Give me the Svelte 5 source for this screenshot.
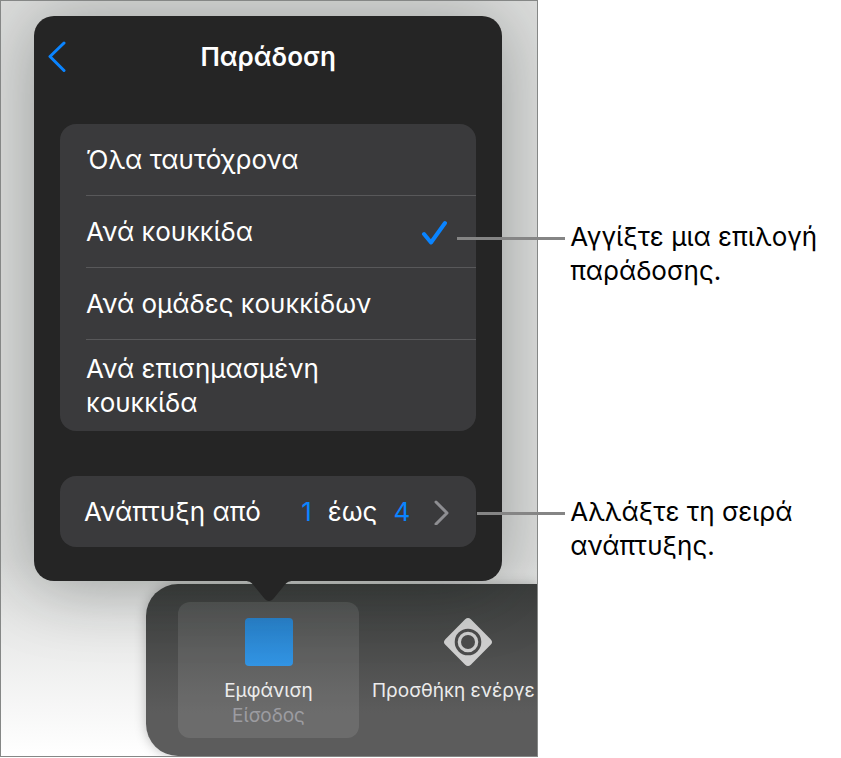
<script>
  let selected = $state("bullet");
  let from = $state(1);
  let to = $state(4);

  const options = [
    { id: "all", label: "Όλα ταυτόχρονα" },
    { id: "bullet", label: "Ανά κουκκίδα" },
    { id: "groups", label: "Ανά ομάδες κουκκίδων" },
    { id: "highlighted", label: "Ανά επισημασμένη κουκκίδα" },
  ];
</script>

<main class="figure">
  <section class="screen">
    <div class="popover">
      <header>
        <button class="back" aria-label="Πίσω">
          <svg viewBox="0 0 20 32" width="20" height="32">
            <path d="M18 2 L4 15.5 L18 29.5" />
          </svg>
        </button>
        <h1>Παράδοση</h1>
      </header>

      <div class="card options">
        {#each options as option}
          <label class="option">
            <input
              type="radio"
              name="delivery"
              value={option.id}
              bind:group={selected}
            />
            <span class="name">{option.label}</span>
            {#if selected === option.id}
              <svg class="check" viewBox="0 0 26 26" width="26" height="26">
                <path d="M3 15 L10 23.5 L24 4" />
              </svg>
            {/if}
          </label>
        {/each}
      </div>

      <button class="card build">
        <span class="name">Ανάπτυξη από</span>
        <span class="number">{from}</span>
        <span>έως</span>
        <span class="number">{to}</span>
        <svg class="chevron" viewBox="0 0 16 26" width="16" height="26">
          <path d="M2 3 L13 14 L2 25" />
        </svg>
      </button>

      <svg class="tail" viewBox="0 0 48 22" width="48" height="22">
        <path d="M0 0 H48 C43 0 41 2 38 6 L29 17 C26 21 22 21 19 17 L10 6 C7 2 5 0 0 0 Z" />
      </svg>
    </div>

    <nav class="toolbar">
      <button class="action current">
        <span class="swatch"></span>
        <span>Εμφάνιση</span>
        <small>Είσοδος</small>
      </button>
      <button class="action">
        <svg class="diamond" viewBox="0 0 50 50" width="50" height="50">
          <rect x="7" y="7" width="36" height="36" rx="4" transform="rotate(45 25 25)" />
          <circle class="ring" cx="25" cy="25" r="11.8" />
          <circle class="dot" cx="25" cy="25" r="7" />
        </svg>
        <span>Προσθήκη ενέργε</span>
      </button>
    </nav>
  </section>

  <aside class="notes">
    <p class="long">Αγγίξτε μια επιλογή παράδοσης.</p>
    <p>Αλλάξτε τη σειρά ανάπτυξης.</p>
  </aside>
</main>

<style>
  :global(body) {
    margin: 0;
    background: #fff;
  }
  .figure {
    display: grid;
    grid-template-columns: 16fr 9fr;
    font-family: Inter, "Open Sans", sans-serif;
    font-size: 26px;
    line-height: 34px;
    color: #000;
  }
  button {
    font: inherit;
    color: inherit;
    border: 0;
    padding: 0;
    background: none;
    text-align: left;
  }
  svg {
    display: block;
    flex: none;
  }
  .screen {
    min-width: 0;
    overflow: hidden;
    border: 1px solid #858786;
    padding-top: 15px;
    background: linear-gradient(#dcdddc 0%, #dcdddc 74%, #fff 100%);
    color: #fff;
  }
  .popover {
    position: relative;
    z-index: 1;
    box-sizing: border-box;
    margin: 0 35px 0 33px;
    padding: 0 26px 34px;
    border-radius: 20px;
    background: #252525;
    box-shadow: 0 4px 70px rgba(20, 30, 25, 0.34);
  }
  header {
    display: grid;
    grid-template-columns: 20px 1fr 20px;
    align-items: center;
    height: 82px;
    margin: 0 -14px 26px;
  }
  h1 {
    margin: 0;
    font-size: 26px;
    font-weight: 600;
    text-align: center;
  }
  .back path,
  .check path,
  .chevron path {
    fill: none;
    stroke: #0a84ff;
    stroke-width: 3;
    stroke-linecap: round;
    stroke-linejoin: round;
  }
  .card {
    border-radius: 16px;
    background: #3a3a3c;
  }
  .options {
    padding-left: 26px;
    margin-bottom: 45px;
  }
  .option {
    display: flex;
    align-items: center;
    box-sizing: border-box;
    min-height: 72px;
    padding: 0 29px 0 0;
  }
  .option:first-child {
    min-height: 71px;
  }
  .option + .option {
    border-top: 1px solid #58585a;
  }
  .option:last-child {
    min-height: 92px;
  }
  .option input {
    position: absolute;
    opacity: 0;
  }
  .option .name {
    flex: 1;
    max-width: 290px;
  }
  .check {
    margin-left: auto;
  }
  .check path {
    stroke-width: 4;
  }
  .build {
    display: flex;
    align-items: center;
    gap: 16px;
    width: 100%;
    height: 71px;
    padding: 0 26px 0 24px;
  }
  .build .name {
    flex: 1;
  }
  .number {
    color: #0a84ff;
  }
  .chevron {
    margin-left: 8px;
  }
  .chevron path {
    stroke: #8e8e92;
  }
  .tail {
    position: absolute;
    top: 100%;
    left: 211px;
    fill: #252525;
  }
  .toolbar {
    display: flex;
    box-sizing: border-box;
    height: 172px;
    margin: 3px 0 0 145px;
    padding: 18px 0 18px 32px;
    border-radius: 32px 0 0 32px;
    background: linear-gradient(#3b3d3c, #5c5c5c 75%);
    box-shadow: 0 0 12px rgba(0, 0, 0, 0.25);
    font-size: 19px;
    line-height: 25px;
    color: #ececec;
  }
  .action {
    flex: none;
    display: flex;
    flex-direction: column;
    justify-content: flex-start;
    align-items: center;
    box-sizing: border-box;
    padding: 16px 13px 0;
    border-radius: 12px;
    white-space: nowrap;
  }
  .current {
    width: 181px;
    background: rgba(255, 255, 255, 0.1);
  }
  .swatch {
    width: 48px;
    height: 48px;
    margin-bottom: 12px;
    border-radius: 4px;
    background: linear-gradient(#2881ca, #3294e3);
  }
  small {
    font-size: 19px;
    color: #9c9ca1;
  }
  .diamond {
    fill: #cfcfcf;
    align-self: flex-start;
    margin: -1px 0 11px 71px;
  }
  .ring {
    fill: none;
    stroke: #4c4c4c;
    stroke-width: 3;
  }
  .dot {
    fill: #4c4c4c;
  }
  .notes {
    display: flex;
    flex-direction: column;
    gap: 207px;
    padding: 220px 0 0 32px;
  }
  .notes p {
    position: relative;
    margin: 0;
  }
  .notes p::before {
    content: "";
    position: absolute;
    z-index: 2;
    top: 17px;
    right: calc(100% + 5px);
    width: 88px;
    height: 3px;
    background: #858585;
  }
  .notes .long::before {
    width: 108px;
  }
</style>
